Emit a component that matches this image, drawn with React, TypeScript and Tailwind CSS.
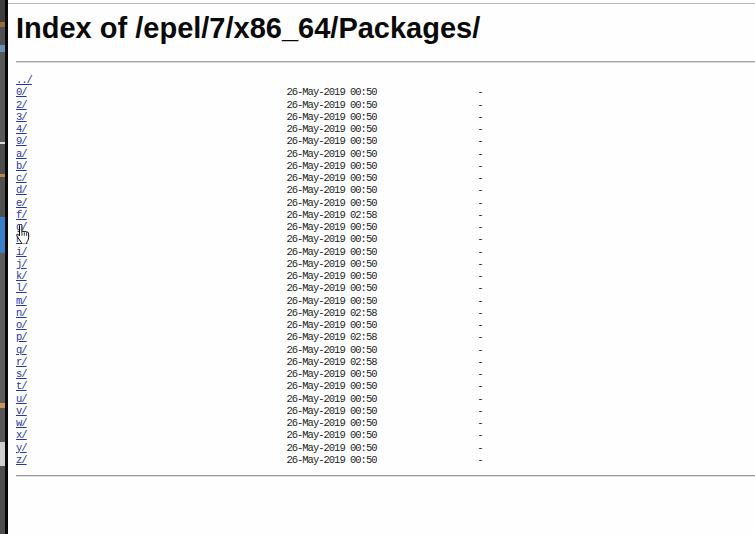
import React from "react"

const names = [
  "0", "2", "3", "4", "9", "a", "b", "c", "d", "e", "f", "g", "h", "i", "j", "k",
  "l", "m", "n", "o", "p", "q", "r", "s", "t", "u", "v", "w", "x", "y", "z",
]

// times that differ from the default 00:50
const lateDirs: Record<string, string> = { f: "02:58", n: "02:58", p: "02:58", r: "02:58" }

function Row({ name }: { name: string }) {
  const label = name + "/"
  const time = lateDirs[name] || "00:50"
  return (
    <div className="h-[12.25px]">
      <a href={"#" + label} className="text-[#2536a8] underline">
        {label}
      </a>
      {" ".repeat(51 - label.length)}
      {"26-May-2019 " + time}
      {" ".repeat(19)}-
    </div>
  )
}

function HandCursor() {
  return (
    <svg className="absolute left-[15px] top-[224px]" width="17" height="20" viewBox="0 0 17 20">
      <path
        d="M4.5 1.5c0-.8.6-1.2 1.2-1.2s1.2.4 1.2 1.2v6.2c.3-.6 2.2-.6 2.4.3.4-.7 2.1-.6 2.3.4.5-.6 2-.3 2 .7v4.6c0 2-1.2 3.6-1.8 4.6v1.8H6.3v-1.6C5.4 17 3.6 14.6 2.3 12.6c-.6-.9-.9-1.6-.4-2.1.6-.5 1.5-.1 2.6 1.4V1.5z"
        fill="#fff"
        stroke="#000"
        strokeWidth="1"
      />
      <path d="M9.3 8.4v3.4M11.6 8.8v3.1M6.9 7.7v4.1" stroke="#000" strokeWidth="0.8" />
    </svg>
  )
}

export default function App() {
  return (
    <div className="relative flex h-[534px] w-[755px] overflow-hidden bg-[#fdfefd]">
      {/* desktop edge behind the browser window */}
      <div className="flex w-[8px] shrink-0">
        <div className="flex w-[5px] flex-col bg-[#4a4b4a]">
          <div className="h-[22px] bg-[#3e3e3e]" />
          <div className="h-[5px] bg-[#9a6a3a]" />
          <div className="h-[18px] bg-[#505050]" />
          <div className="h-[7px] bg-[#6a8fb8]" />
          <div className="h-[90px] bg-[#585858]" />
          <div className="h-[2px] bg-[#d8d8d8]" />
          <div className="h-[30px] bg-[#4c4c4c]" />
          <div className="h-[3px] bg-[#c08840]" />
          <div className="h-[40px] bg-[#505050]" />
          <div className="h-[36px] bg-[#3a80c8]" />
          <div className="h-[150px] bg-[#5b5b5b]" />
          <div className="h-[5px] bg-[#c89650]" />
          <div className="h-[34px] bg-[#565656]" />
          <div className="h-[24px] bg-[#cfcfcf]" />
          <div className="flex-1 bg-[#4e4e4e]" />
        </div>
        <div className="w-[3px] bg-[#070707]" />
      </div>

      <div className="flex-1 pt-[3px]">
        <div className="h-px bg-[#bdbdbd]" />
        <div className="pl-[8px]">
          <h1 className="mt-[10px] h-[29px] whitespace-nowrap font-['Liberation_Sans',Arial,sans-serif] text-[29px] font-bold leading-[29px] text-[#0a0a0a]">
            Index of /epel/7/x86_64/Packages/
          </h1>
          <div className="mt-[18px] h-[2px] border-t border-b border-t-[#a8a8a8] border-b-[#d8d8d8]" />
          <div className="mt-[11px] whitespace-pre font-['Liberation_Mono',monospace] text-[10.5px] leading-[12.25px] tracking-[-1px] text-[#1e1e1e]">
            <div className="h-[12.25px]">
              <a href="#up" className="text-[#2536a8] underline">
                ../
              </a>
            </div>
            {names.map((n) => (
              <Row key={n} name={n} />
            ))}
          </div>
          <div className="mt-[9px] h-[2px] border-t border-b border-t-[#959595] border-b-[#e0e0e0]" />
        </div>
      </div>

      <HandCursor />
    </div>
  )
}
